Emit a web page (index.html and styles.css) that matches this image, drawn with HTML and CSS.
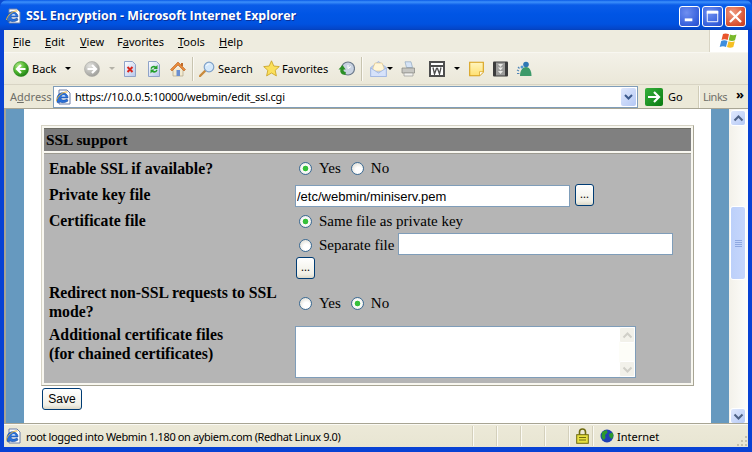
FILE: index.html
```html
<!DOCTYPE html>
<html lang="en">
<head>
<meta charset="utf-8">
<title>SSL Encryption - Microsoft Internet Explorer</title>
<link rel="stylesheet" href="styles.css">
</head>
<body>
<svg class="defs" width="0" height="0" aria-hidden="true">
  <defs>
    <radialGradient id="gGreen" cx="35%" cy="30%" r="75%"><stop offset="0" stop-color="#b6ec8c"/><stop offset=".55" stop-color="#4fb52e"/><stop offset="1" stop-color="#1d7d16"/></radialGradient>
    <radialGradient id="gGray" cx="35%" cy="30%" r="75%"><stop offset="0" stop-color="#e4e4e0"/><stop offset="1" stop-color="#9c9c98"/></radialGradient>
    <linearGradient id="gPage" x1="0" y1="0" x2="1" y2="1"><stop offset="0" stop-color="#fff"/><stop offset="1" stop-color="#b6c6ea"/></linearGradient>
    <linearGradient id="gNote" x1="0" y1="0" x2="0" y2="1"><stop offset="0" stop-color="#fff5c0"/><stop offset="1" stop-color="#ffe070"/></linearGradient>
    <linearGradient id="gGo" x1="0" y1="0" x2="1" y2="1"><stop offset="0" stop-color="#35b03a"/><stop offset="1" stop-color="#0a7a12"/></linearGradient>
    <symbol id="ie" viewBox="0 0 16 16">
      <path d="M3 1h8l3 3v11H3z" fill="#fff" stroke="#6c7fa8"/>
      <path d="M1 10c0-4 3-7 7-6 3 .6 4 3 4 5H5c0 2 3 3 6 1l1 2c-3 2-6 2-8 1-1.400 1-3 1-3 0z" fill="#2a70d8" stroke="#174a9c" stroke-width=".6"/>
      <path d="M5.500 7.500h4c-.4-1.700-3.400-1.700-4 0z" fill="#fff"/>
      <path d="M.5 12c0-4 7-10 11-9" fill="none" stroke="#e6b23c" stroke-width="1"/>
    </symbol>
  </defs>
</svg>
<div class="window">
  <header class="titlebar">
    <svg class="title-icon"><use href="#ie"/></svg>
    <span class="title-text">SSL Encryption - Microsoft Internet Explorer</span>
    <div class="winbtns">
      <span class="winbtn"><svg viewBox="0 0 20 20"><rect x="5" y="12" width="8" height="3" fill="#fff"/></svg></span>
      <span class="winbtn"><svg viewBox="0 0 20 20"><path d="M4.500 4.500h11v11h-11z" fill="none" stroke="#fff"/><rect x="4" y="4" width="12" height="3" fill="#fff"/></svg></span>
      <span class="winbtn close"><svg viewBox="0 0 20 20"><path d="M5 5l10 10M15 5L5 15" stroke="#fff" stroke-width="2.400" stroke-linecap="square"/></svg></span>
    </div>
  </header>
  <div class="frame">
    <nav class="menubar">
      <div class="menus">
        <span class="m1"><u>F</u>ile</span><span class="m2"><u>E</u>dit</span><span class="m3"><u>V</u>iew</span><span class="m4">F<u>a</u>vorites</span><span class="m5"><u>T</u>ools</span><span class="m6"><u>H</u>elp</span>
      </div>
      <div class="flagbox">
        <svg width="20" height="18" viewBox="0 0 20 18">
          <path d="M4 2c2-1 4-.5 6 .2L8.700 8C6.500 7 4.500 7 2.500 8z" fill="#e8552c"/>
          <path d="M11 2.500c2 .8 4 1 6.500 0L16 8.200c-2 1-4.500.8-6.300 0z" fill="#7ab92c"/>
          <path d="M2.200 9c2-1 4.300-1 6.300 0L7 15c-2-1-4-1-6.300 0z" fill="#3f8ede"/>
          <path d="M9.500 9.300c2 .8 4 1 6.300 0L14.300 15c-2 1-4.500 1-6.300 0z" fill="#f6bf24"/>
        </svg>
      </div>
    </nav>
    <div class="toolbar">
      <svg class="ic16 t-back" viewBox="0 0 16 16"><circle cx="8" cy="8" r="7.500" fill="url(#gGreen)" stroke="#2d8a1f" stroke-width=".6"/><path d="M12.500 8H5M8 4L4 8l4 4" fill="none" stroke="#fff" stroke-width="2.200"/></svg>
      <span class="tb-label back-label">Back</span>
      <i class="caret c-back"></i>
      <svg class="ic16 t-fwd" viewBox="0 0 16 16"><circle cx="8" cy="8" r="7.500" fill="url(#gGray)" stroke="#a8a8a2" stroke-width=".6"/><path d="M3.500 8H11M8 4l4 4-4 4" fill="none" stroke="#fff" stroke-width="2.200"/></svg>
      <i class="caret c-fwd dim"></i>
      <svg class="ic16 t-stop" viewBox="0 0 14 16"><path d="M1.500.5h8l3 3v12h-11z" fill="url(#gPage)" stroke="#8fa3c8"/><path d="M4.500 6l5 5M9.500 6l-5 5" stroke="#d8261c" stroke-width="2"/></svg>
      <svg class="ic16 t-ref" viewBox="0 0 14 16"><path d="M1.500.5h8l3 3v12h-11z" fill="url(#gPage)" stroke="#8fa3c8"/><path d="M3.500 7.500C4 5 7 4 9 5.500L10.500 4v4h-4l1.200-1.200C6.500 6 5 6.500 4.800 8zM10.500 9C10 11.500 7 12.500 5 11L3.500 12.500v-4h4L6.300 9.700c1.200.8 2.700.3 2.900-1z" fill="#23a02c"/></svg>
      <svg class="ic16 t-home" viewBox="0 0 16 16"><path d="M3 7.500V15h10V7.500" fill="#f3ead0" stroke="#b0a488" stroke-width=".7"/><path d="M.5 8.500L8 1l7.500 7.500L14 10 8 4 2 10z" fill="#e88a3a" stroke="#b85f1c" stroke-width=".6"/><rect x="11" y="2" width="2" height="3" fill="#c06a28"/><rect x="6.500" y="9" width="3.500" height="6" fill="#6b8fd0"/></svg>
      <i class="tb-sep s-1"></i>
      <svg class="ic16 t-search" viewBox="0 0 16 16"><path d="M1 15l5-5" stroke="#c88a3c" stroke-width="2.400" stroke-linecap="round"/><circle cx="10" cy="6" r="4.800" fill="#d4e8fa" stroke="#7ea0c8" stroke-width="1.200"/><path d="M7.500 5c.5-1.400 1.800-2 3-2" stroke="#fff" fill="none"/></svg>
      <span class="tb-label search-label">Search</span>
      <svg class="ic17 t-star" viewBox="0 0 17 17"><path d="M8.500.8l2.300 5.200 5.500.6-4.100 3.700 1.200 5.600-4.900-2.900-4.900 2.900 1.200-5.600L.7 6.600l5.500-.6z" fill="#fbe05c" stroke="#c8a020" stroke-width=".8"/></svg>
      <span class="tb-label fav-label">Favorites</span>
      <svg class="ic17 t-hist" viewBox="0 0 17 17"><circle cx="10" cy="8.500" r="6.500" fill="#c9d3e2" stroke="#6c7a8c" stroke-width="1.200"/><path d="M10 5v3.500l3-2" stroke="#fff" fill="none"/><path d="M7.500 15C3.500 15 1.500 12 2.500 9.500H.5L4.500 5l3.200 4.500H5.600c-.3 1.500.5 2.500 2.200 2.500z" fill="#2b8f26"/></svg>
      <i class="tb-sep s-2"></i>
      <svg class="ic17 t-mail" viewBox="0 0 17 17"><path d="M.7 7.500L8.500 1.500l7.800 6v9H.7z" fill="#bcd0f4" stroke="#9db4e0" stroke-width=".8"/><path d="M3 8l2-5h7l2 5v3H3z" fill="#fff6d8" stroke="#e0c078" stroke-width=".6"/><path d="M.7 8l7.800 5 7.800-5v8.500H.7z" fill="#d6e2fa" stroke="#9db4e0" stroke-width=".8"/></svg>
      <i class="caret c-mail"></i>
      <svg class="ic15 t-print" viewBox="0 0 15 16"><path d="M4 .8h6l1.500 5.700h-6z" fill="#d6e4f6" stroke="#90a8c0" stroke-width=".7"/><path d="M1 7h12.500v5H1z" fill="#c6c6c2" stroke="#848480" stroke-width=".7"/><path d="M3 12h9v3H3z" fill="#f2f2ee" stroke="#9a9a96" stroke-width=".7"/></svg>
      <svg class="ic16 t-w" viewBox="0 0 16 16"><rect width="16" height="16" fill="#4e4e4e"/><rect x="2" y="2" width="12" height="12" fill="#fff"/><rect x="2" y="4" width="12" height="2" fill="#4e4e4e"/><path d="M4 6.500l1.500 6.500 2-5.500h1l2 5.500L12 6.500" fill="none" stroke="#4e4e4e" stroke-width="1.300"/></svg>
      <i class="caret c-w"></i>
      <svg class="ic15 t-note" viewBox="0 0 15 15"><path d="M.7.700h13.600v9.800l-3.800 3.800H.7z" fill="url(#gNote)" stroke="#d8a018" stroke-width="1.100"/><path d="M10.500 14v-3.800h3.800" fill="#fff" stroke="#d8a018" stroke-width=".7"/></svg>
      <svg class="ic15 t-film" viewBox="0 0 15 15"><rect width="15" height="15" fill="#3c3c3c" rx="1"/><rect x="3" y="1" width="9" height="13" fill="#9c9c9a"/><path d="M5 2.500h5L7.500 5.500zM5 6h5L7.500 9zM5 9.500h5L7.500 12.500z" fill="#e8e8e4"/></svg>
      <svg class="ic16 t-msn" viewBox="0 0 16 16"><circle cx="10" cy="3.500" r="2.800" fill="#2e78b4"/><path d="M4 15c0-6 3-9 6-9s5.500 3 5.500 9z" fill="#3d9a6a"/><circle cx="6" cy="6" r="1.500" fill="#4f9ad4"/><path d="M1 9l2 1M1 12.500h2.400M2 6l1.500 1.500" stroke="#4f86b8" stroke-width="1.200"/></svg>
    </div>
    <div class="addressbar">
      <span class="addr-label">A<u>d</u>dress</span>
      <div class="addr-field">
        <svg class="addr-icon"><use href="#ie"/></svg>
        <span class="addr-url">https://10.0.0.5:10000/webmin/edit_ssl.cgi</span>
        <span class="addr-drop"><svg width="9" height="6" viewBox="0 0 9 6"><path d="M1 1l3.500 3.500L8 1" fill="none" stroke="#3c5a8c" stroke-width="2"/></svg></span>
      </div>
      <svg class="go-icon" viewBox="0 0 18 18"><rect width="18" height="18" rx="2" fill="url(#gGo)"/><path d="M3 9h10M9 4l5 5-5 5" fill="none" stroke="#fff" stroke-width="2.200"/></svg>
      <span class="go-label">Go</span>
      <i class="addr-sep"></i>
      <span class="links">Links</span>
      <span class="chev">&raquo;</span>
    </div>
    <div class="viewport">
      <aside class="strip"></aside>
      <main class="page">
        <form class="panel">
          <h2 class="panel-head">SSL support</h2>
          <div class="panel-body">
            <div class="row r1">
              <label class="lbl">Enable SSL if available?</label>
              <div class="val choice"><input type="radio" name="ssl" checked><span class="opt">Yes</span><input type="radio" name="ssl"><span>No</span></div>
            </div>
            <div class="row r2">
              <label class="lbl">Private key file</label>
              <div class="val inline"><input class="txt wide" type="text" value="/etc/webmin/miniserv.pem"><button class="dots" type="button">...</button></div>
            </div>
            <div class="row r3">
              <label class="lbl">Certificate file</label>
              <div class="val stack">
                <div class="choice c-same"><input type="radio" name="cert" checked><span>Same file as private key</span></div>
                <div class="choice c-sep"><input type="radio" name="cert"><span>Separate file</span><input class="txt wide sepinput" type="text"></div>
                <button class="dots under" type="button">...</button>
              </div>
            </div>
            <div class="row r4">
              <label class="lbl">Redirect non-SSL requests to SSL mode?</label>
              <div class="val choice"><input type="radio" name="red"><span class="opt">Yes</span><input type="radio" name="red" checked><span>No</span></div>
            </div>
            <div class="row r5">
              <label class="lbl">Additional certificate files<br>(for chained certificates)</label>
              <div class="val">
                <div class="ta">
                  <textarea aria-label="Additional certificate files"></textarea>
                  <div class="ta-bar">
                    <span class="ta-btn"><svg width="11" height="7" viewBox="0 0 11 7"><path d="M1.500 5.500l4-4 4 4" fill="none" stroke="#d0cfc8" stroke-width="2"/></svg></span>
                    <span class="ta-btn"><svg width="11" height="7" viewBox="0 0 11 7"><path d="M1.500 1.500l4 4 4-4" fill="none" stroke="#d0cfc8" stroke-width="2"/></svg></span>
                  </div>
                </div>
              </div>
            </div>
          </div>
        </form>
        <button class="save" type="button">Save</button>
      </main>
      <aside class="strip"></aside>
      <div class="scroll">
        <span class="sb-btn"><svg width="11" height="7" viewBox="0 0 11 7"><path d="M1.500 5.500l4-4 4 4" fill="none" stroke="#4d6185" stroke-width="2"/></svg></span>
        <span class="sb-gap g1"></span>
        <span class="sb-thumb"><i></i><i></i><i></i><i></i></span>
        <span class="sb-gap"></span>
        <span class="sb-btn"><svg width="11" height="7" viewBox="0 0 11 7"><path d="M1.500 1.500l4 4 4-4" fill="none" stroke="#4d6185" stroke-width="2"/></svg></span>
      </div>
    </div>
    <footer class="statusbar">
      <svg class="st-icon"><use href="#ie"/></svg>
      <span class="st-text">root logged into Webmin 1.180 on aybiem.com (Redhat Linux 9.0)</span>
      <i class="st-cell"></i><i class="st-cell"></i><i class="st-cell"></i><i class="st-cell"></i>
      <span class="st-cell lockcell"><svg width="13" height="16" viewBox="0 0 13 16"><path d="M3.500 7V4a3 3 0 0 1 6 0v3" fill="none" stroke="#6e6a10" stroke-width="1.600"/><rect x=".7" y="6.700" width="11.600" height="8.600" fill="#e8e040" stroke="#6e6a10"/><path d="M3 9.500h7M3 12h7" stroke="#6e6a10"/></svg></span>
      <span class="st-cell zone">
        <svg width="14" height="14" viewBox="0 0 14 14"><circle cx="7" cy="7" r="6.500" fill="#1f3fb4"/><path d="M2 3.500c2-2 4-2.500 5-2l.5 2L5 6 5.500 9 3.500 11 1.500 8zM9 5l3.500-1.500 1 3L12 10 9.500 8z" fill="#2c9a2c"/></svg>
        <span>Internet</span>
      </span>
      <svg class="grip" width="11" height="11" viewBox="0 0 11 11"><path d="M8 0h2v2H8zM4 4h2v2H4zM8 4h2v2H8zM0 8h2v2H0zM4 8h2v2H4zM8 8h2v2H8z" fill="#c4c0ac"/></svg>
    </footer>
  </div>
</div>
</body>
</html>
```
FILE: styles.css
```css
* { box-sizing: border-box; }
html, body { margin: 0; padding: 0; }
body { width: 752px; height: 452px; overflow: hidden; background: #0a4ad0; }
.defs { display: block; height: 0; }
.window {
  width: 752px; height: 452px; display: flex; flex-direction: column;
  background: #0842d4; border-radius: 7px 7px 0 0; overflow: hidden;
  font-family: "Noto Sans", sans-serif; font-size: 11px; color: #000;
}
.titlebar {
  height: 30px; flex: none; display: flex; align-items: center; padding: 1px 6px 0 6px;
  background: linear-gradient(#0a5ae6 0, #3d90fb 2px, #0a5ce8 5px, #0055e5 14px, #0052e0 24px, #0445c8 29px, #0340b8 30px);
}
.title-icon { width: 16px; height: 16px; flex: none; margin-right: 4px; }
.title-text {
  font-family: "Open Sans", sans-serif; font-weight: 700; font-size: 12.400px; color: #fff;
  text-shadow: 1px 1px 0 #0a2f98; white-space: nowrap;
}
.winbtns { margin-left: auto; display: flex; gap: 2px; margin-top: 1px; }
.winbtn {
  width: 21px; height: 21px; border: 1px solid #fff; border-radius: 3px; display: block;
  background: radial-gradient(circle at 35% 30%, #6f8ff0, #3660dc 70%, #2a4cc8);
}
.winbtn svg { display: block; width: 19px; height: 19px; }
.winbtn.close { background: radial-gradient(circle at 35% 30%, #ef9a80, #d85030 70%, #c03c20); }

.frame { flex: 1; min-height: 0; margin: 0 4px 5px 4px; display: flex; flex-direction: column; background: #ece9d8; }
.menubar { height: 23px; flex: none; display: flex; border-bottom: 1px solid #f8f7f1; box-shadow: inset 0 -1px 0 #d8d4c4; }
.menus { flex: 1; display: flex; align-items: center; background: #eeecdf; }
.menus span { display: block; }
.m1 { margin-left: 9px; width: 32px; }
.m2 { width: 35px; }
.m3 { width: 37px; }
.m4 { width: 61px; }
.m5 { width: 41px; }
.flagbox {
  width: 39px; margin-right: 0; background: #fff; border-left: 1px solid #d8d4c4;
  display: flex; align-items: center; justify-content: center;
}
.toolbar {
  height: 32px; flex: none; display: flex; align-items: center; padding-left: 9px;
  background: linear-gradient(#f3f1e8, #ebe8d9); border-bottom: 1px solid #d8d4c4;
  font-size: 11px;
}
.ic16, .ic17, .ic15 { flex: none; display: block; }
.ic16 { width: 16px; height: 16px; }
.ic17 { width: 17px; height: 17px; }
.ic15 { width: 15px; height: 16px; }
.tb-label { white-space: nowrap; flex: none; }
.caret { display: block; flex: none; width: 0; height: 0; border: 3px solid transparent; border-top: 3px solid #000; border-bottom: 0; }
.caret.dim { border-top-color: #b4b2a8; }
.back-label { margin-left: 3px; width: 33px; }
.t-fwd { margin-left: 13px; }
.c-fwd { margin-left: 9px; }
.t-stop { margin-left: 7px; }
.t-ref { margin-left: 8px; }
.t-home { margin-left: 8px; }
.tb-sep { display: block; flex: none; width: 1px; height: 24px; background: #c8c4b0; box-shadow: 1px 0 0 #fbfaf5; }
.s-1 { margin-left: 6px; }
.t-search { margin-left: 6px; }
.search-label { margin-left: 3px; width: 35px; }
.t-star { margin-left: 10px; }
.fav-label { margin-left: 2px; width: 46px; letter-spacing: -.1px; }
.t-hist { margin-left: 10px; }
.s-2 { margin-left: 6px; }
.t-mail { margin-left: 8px; }
.c-mail { margin-left: 0; }
.t-print { margin-left: 8px; }
.t-w { margin-left: 13px; }
.c-w { margin-left: 9px; }
.t-note { margin-left: 9px; }
.t-film { margin-left: 9px; }
.t-msn { margin-left: 8px; }

.addressbar {
  height: 24px; flex: none; display: flex; align-items: center;
  background: #ece9d8; border-bottom: 1px solid #a8a594; font-size: 11px;
}
.addr-label { margin-left: 6px; width: 43px; color: #6f6f68; }
.addr-field {
  width: 585px; height: 22px; display: flex; align-items: center; background: #fff;
  border: 1px solid #7f9db9; padding-left: 2px;
}
.addr-icon { width: 16px; height: 16px; flex: none; }
.addr-url { margin-left: 3px; flex: 1; white-space: nowrap; letter-spacing: -.2px; }
.addr-drop {
  width: 15px; height: 18px; margin-right: 1px; border-radius: 2px; display: flex; align-items: center; justify-content: center;
  background: linear-gradient(135deg, #e0e9fd, #b4c8f4);
}
.go-icon { width: 18px; height: 18px; flex: none; margin-left: 7px; }
.go-label { margin-left: 5px; width: 31px; }
.addr-sep { display: block; width: 1px; height: 22px; background: #fbfaf5; box-shadow: -1px 0 0 #d0ccb8; }
.links { margin-left: 3px; width: 33px; color: #6f6f68; letter-spacing: -.5px; }
.chev { font-weight: 700; font-size: 13px; line-height: 10px; margin-top: -6px; }

.viewport { flex: 1; min-height: 0; display: flex; background: #fff; border-left: 2px solid #a8a594; }
.strip { width: 18px; flex: none; background: #6699bf; }
.page { width: 687px; flex: none; background: #fff; padding: 16px 0 0 17px; }
.panel {
  width: 653px; border: 1px solid #d6d3c5; border-right-color: #a8a594; border-bottom-color: #a8a594;
  padding: 2px; background: #f8f7f0; margin: 0;
}
.panel-head {
  margin: 0; height: 23px; background: #808080; border-top: 1px solid #6c6c64;
  font: 700 15.400px/22px "Liberation Serif", serif; padding-left: 2px; color: #000;
}
.panel-body {
  margin-top: 2px; background: #b5b5b5; border-top: 1px solid #9c9a90;
  font: 15px/19px "Liberation Serif", serif; height: 230px; padding-left: 5px;
}
.row { display: grid; grid-template-columns: 246px 1fr; }
.lbl { font-weight: 700; font-size: 15.750px; display: block; }
.val { min-width: 0; }
.r1 { height: 29px; padding-top: 5px; }
.r1 .val { margin-top: -2px; height: 22px; }
.r2 { height: 24px; padding-top: 2px; }
.r3 { height: 76px; padding-top: 2px; }
.r3 .lbl { margin-top: 2px; }
.r4 { height: 43px; padding-top: 0; }
.r4 .val { margin-top: -3px; }
.r5 { height: 58px; }
.r5 .lbl { margin-top: -1px; }
.choice { display: flex; align-items: center; }
input[type="radio"] {
  appearance: none; -webkit-appearance: none; margin: 0 7px 0 4px; width: 13px; height: 13px; flex: none;
  border: 1px solid #3a6a94; border-radius: 50%; background: radial-gradient(circle at 60% 65%, #fff 30%, #dcdad0 90%);
}
input[type="radio"]:checked { background: radial-gradient(circle, #36c03a 0 2.500px, #fff 3.200px, #dcdad0 100%); }
.opt { margin-right: 6px; }
.inline { display: flex; align-items: flex-start; }
.txt {
  height: 22px; border: 1px solid #7f9db9; background: #fff; padding: 1px 1px; margin: 0;
  font: 13px "Liberation Sans", sans-serif; color: #000; border-radius: 0;
}
.wide { width: 275px; }
.dots {
  width: 19px; height: 22px; margin: -1px 0 0 5px; padding: 0 0 3px; border: 1px solid #003c74; border-radius: 3px;
  background: linear-gradient(#fff, #f0efe6 80%, #dcd8c8); font: 11px "Noto Sans", sans-serif; color: #000;
}
.stack { display: flex; flex-direction: column; }
.c-same { height: 24px; }
.c-sep { height: 24px; }
.sepinput { margin: -2px 0 0 4px; }
.dots.under { margin: 0 0 0 1px; }
.ta { width: 341px; height: 52px; display: flex; border: 1px solid #7f9db9; background: #fff; }
.ta textarea { flex: 1; min-width: 0; border: 0; resize: none; background: #fff; margin: 0; padding: 0; outline: 0; }
.ta-bar { width: 16px; flex: none; display: flex; flex-direction: column; justify-content: space-between; background: #fdfdf8; }
.ta-btn { height: 16px; display: flex; align-items: center; justify-content: center; background: #f2f1ea; border: 1px solid #fff; border-radius: 2px; }
.save {
  display: block; margin: 2px 0 0 1px; width: 40px; height: 22px; padding: 0; border: 1px solid #003c74; border-radius: 3px;
  background: linear-gradient(#fff, #f0efe6 80%, #dcd8c8); font: 12px "Liberation Sans", sans-serif; color: #000;
}
.scroll { flex: 1; min-width: 0; display: flex; flex-direction: column; background: linear-gradient(90deg, #f3f1ea, #fdfdfa); padding: 1px 1px 0 0; }
.sb-btn {
  height: 16px; flex: none; margin: 0 1px; border: 1px solid #fff; border-radius: 3px; display: flex; align-items: center; justify-content: center;
  background: linear-gradient(135deg, #dfe8fd, #b6caf6);
}
.sb-gap { flex: 1; }
.g1 { flex: none; height: 80px; }
.sb-thumb {
  height: 74px; flex: none; margin: 0 1px; border: 1px solid #fff; border-radius: 3px; background: linear-gradient(90deg, #bcd0fa, #c6d6fc);
  display: flex; flex-direction: column; align-items: center; justify-content: center; gap: 1px;
}
.sb-thumb i { display: block; width: 7px; height: 1px; background: #8fa8e0; }

.statusbar {
  height: 23px; flex: none; display: flex; align-items: center; padding-left: 2px;
  background: linear-gradient(#ece9d8, #e8e5d2); border-top: 1px solid #fbfaf4; box-shadow: 0 -1px 0 #a8a594; font-size: 11px;
}
.st-icon { width: 16px; height: 16px; flex: none; margin-right: 4px; }
.st-text { width: 447px; white-space: nowrap; flex: none; letter-spacing: -.38px; }
.st-cell { display: flex; align-items: center; width: 24px; height: 20px; border-left: 1px solid #fbfaf4; box-shadow: -1px 0 0 #d4d0bc; flex: none; }
.lockcell { padding-left: 6px; }
.zone { width: 140px; padding-left: 6px; gap: 3px; }
.grip { margin-left: auto; margin-top: 10px; flex: none; }
```
